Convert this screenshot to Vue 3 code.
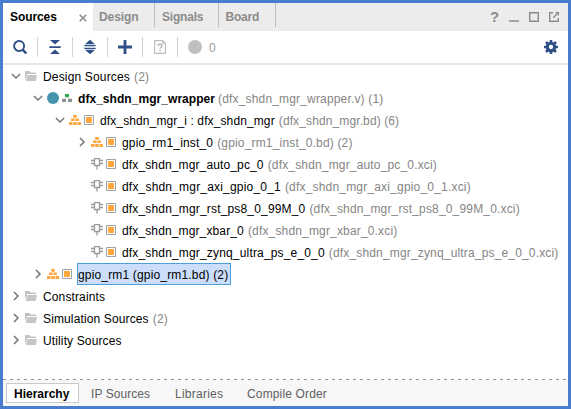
<script setup>
const tabs = ['Design', 'Signals', 'Board']
const views = ['IP Sources', 'Libraries', 'Compile Order']
const rows = [
  { depth: 0, open: true, icon: 'folder', name: 'Design Sources', note: '(2)' },
  { depth: 1, open: true, icon: 'top', name: 'dfx_shdn_mgr_wrapper', note: '(dfx_shdn_mgr_wrapper.v) (1)', cls: 'bold' },
  { depth: 2, open: true, icon: 'bd', name: 'dfx_shdn_mgr_i : dfx_shdn_mgr', note: '(dfx_shdn_mgr.bd) (6)', cls: 'instance' },
  { depth: 3, open: false, icon: 'bd', name: 'gpio_rm1_inst_0', note: '(gpio_rm1_inst_0.bd) (2)' },
  { depth: 3, icon: 'ip', name: 'dfx_shdn_mgr_auto_pc_0', note: '(dfx_shdn_mgr_auto_pc_0.xci)', cls: 'short' },
  { depth: 3, icon: 'ip', name: 'dfx_shdn_mgr_axi_gpio_0_1', note: '(dfx_shdn_mgr_axi_gpio_0_1.xci)', cls: 'long' },
  { depth: 3, icon: 'ip', name: 'dfx_shdn_mgr_rst_ps8_0_99M_0', note: '(dfx_shdn_mgr_rst_ps8_0_99M_0.xci)' },
  { depth: 3, icon: 'ip', name: 'dfx_shdn_mgr_xbar_0', note: '(dfx_shdn_mgr_xbar_0.xci)', cls: 'short' },
  { depth: 3, icon: 'ip', name: 'dfx_shdn_mgr_zynq_ultra_ps_e_0_0', note: '(dfx_shdn_mgr_zynq_ultra_ps_e_0_0.xci)' },
  { depth: 1, open: false, icon: 'bd', name: 'gpio_rm1 (gpio_rm1.bd) (2)', cls: 'selected' },
  { depth: 0, open: false, icon: 'folder', name: 'Constraints', cls: 'short' },
  { depth: 0, open: false, icon: 'folder', name: 'Simulation Sources', note: '(2)', cls: 'short' },
  { depth: 0, open: false, icon: 'folder', name: 'Utility Sources', cls: 'short' },
]
</script>

<template>
  <div class="panel">
    <header class="tabbar">
      <div class="tab active"><span>Sources</span>
        <svg class="close" width="8" height="8" viewBox="0 0 8 8"><path d="M.7.7 7.3 7.3M7.3.7.7 7.3" stroke="#8c8c8c" stroke-width="1.5" /></svg>
      </div>
      <div v-for="t in tabs" :key="t" class="tab" :class="t.toLowerCase()"><span>{{ t }}</span></div>
      <div class="window">
        <span class="help">?</span>
        <svg width="10" height="10" viewBox="0 0 10 10"><path d="M0 9h10" stroke="#8c8c8c" stroke-width="1.5" /></svg>
        <svg width="10" height="10" viewBox="0 0 10 10"><path d="M.7.8h8.6v8.5H.7z" fill="none" stroke="#8c8c8c" stroke-width="1.5" /></svg>
        <svg width="10" height="10" viewBox="0 0 10 10"><path d="M4 .8H.7v8.5h8.6V6" fill="none" stroke="#8c8c8c" stroke-width="1.4" /><path d="M4.3 5.7 8 2" stroke="#8c8c8c" stroke-width="1.5" /><path d="M6 0h4v4z" fill="#8c8c8c" /></svg>
      </div>
    </header>

    <div class="toolbar">
      <div class="tool">
        <svg width="16" height="16" viewBox="0 0 16 16"><circle cx="7.1" cy="7" r="5" fill="none" stroke="#2f4f87" stroke-width="1.9" /><path d="m10.6 10.6 3.7 3.9" stroke="#2f4f87" stroke-width="2.5" /></svg>
      </div>
      <div class="tool">
        <svg width="16" height="16" viewBox="0 0 16 16"><path d="M3 1h10L8 5.600zM2.300 7.200h11.400v1.700H2.300zM3 15h10L8 10.400z" fill="#2f4f87" /></svg>
      </div>
      <div class="tool">
        <svg width="16" height="16" viewBox="0 0 16 16"><path d="M3 5.200 8 .8l5 4.400zM3 10.800h10L8 15.200z" fill="#2f4f87" /><path d="M2.300 6.600h11.400M2.300 9.400h11.400" stroke="#2f4f87" stroke-width="1.400" /></svg>
      </div>
      <div class="tool">
        <svg width="16" height="16" viewBox="0 0 16 16"><path d="M8 1v14M1 8h14" stroke="#2f4f87" stroke-width="2.800" /></svg>
      </div>
      <div class="tool">
        <svg width="16" height="16" viewBox="0 0 16 16"><path d="M2.600 1.600h8.200l2.600 2.600v10.200H2.600z" fill="none" stroke="#bdbdbd" stroke-width="1.200" /><path d="M10.200 1.500v3.200h3.200" fill="#bdbdbd" /><path d="M6 6.800q0-1.600 2-1.600t2 1.600q0 .9-1 1.500T8 9.800M8 10.900v1.600" fill="none" stroke="#b5b5b5" stroke-width="1.400" /></svg>
      </div>
      <div class="messages">
        <svg width="14" height="14" viewBox="0 0 14 14"><circle cx="7" cy="7" r="7" fill="#c0c0c0" /><path d="M7 3v5M7 9.500v1.500" stroke="#b6b6b6" stroke-width="1.300" /></svg>
        <span class="count">0</span>
      </div>
      <svg class="gear" width="14" height="14" viewBox="0 0 14 14"><circle cx="7" cy="7" r="3.700" fill="none" stroke="#2f4f87" stroke-width="3.100" /><path d="M7 0v3M7 11v3M0 7h3M11 7h3M2 2l2 2M10 10l2 2M12 2l-2 2M4 10l-2 2" stroke="#2f4f87" stroke-width="2.600" /></svg>
    </div>

    <main class="tree">
      <div v-for="row in rows" :key="row.name" class="row" :class="[row.cls, 'depth' + row.depth]">
        <svg class="chevron" width="10" height="10" viewBox="0 0 10 10">
          <path v-if="row.open" d="M.9 3 5 7l4.100-4" />
          <path v-else-if="row.open === false" d="M3 .9 7 5 3 9.100" />
        </svg>
        <svg v-if="row.icon === 'folder'" class="icon" width="12" height="12" viewBox="0 0 12 12"><path d="M0 9.500V1h4.500l1 1.500H11V5H2.500z" fill="#c2c2c2" /><path d="M1.800 4H11v1.200H1.800z" fill="#fff" /><path d="M2.800 5H12l-1.200 6H.6z" fill="#c6c6c6" /></svg>
        <svg v-else-if="row.icon === 'top'" class="icon" width="12" height="12" viewBox="0 0 12 12"><circle cx="6" cy="6" r="6" fill="#4594ad" /></svg>
        <svg v-else-if="row.icon === 'bd'" class="icon" width="12" height="12" viewBox="0 0 12 12"><path d="M4.200 1h3.600v2.800H4.200zM2.100 4.500h3.500v2.600H2.100zM6.400 4.500h3.500v2.600H6.400zM0 8h3.500v2.900H0zM4.250 8h3.500v2.900h-3.500zM8.500 8H12v2.900H8.500z" fill="#ffa63d" /></svg>
        <svg v-else class="icon" width="12" height="12" viewBox="0 0 12 12"><path d="M3.500.6h5v6.900h-5zM0 2.500h3M0 5.500h3M9 2.500h3M9 5.500h3M6 8v3.500" fill="none" stroke="#999b9f" stroke-width="1.300" /></svg>
        <svg v-if="row.icon === 'top'" class="icon2" width="10" height="10" viewBox="0 0 10 10"><path d="M3 1h4v3.300H3z" fill="#34a853" /><path d="M0 5.700h4V9H0zM6 5.700h4V9H6z" fill="#8f9195" /></svg>
        <svg v-else-if="row.icon !== 'folder'" class="icon2" width="10" height="10" viewBox="0 0 10 10"><path d="M.5.5h9v9h-9z" fill="#fff" stroke="#a0a3a8" /><path d="M2 2h6v6H2z" fill="#ffa63d" /></svg>
        <div class="label"><span class="name">{{ row.name }}</span><span v-if="row.note" class="note">{{ row.note }}</span></div>
      </div>
    </main>

    <footer class="views">
      <div class="view current"><span>Hierarchy</span></div>
      <div v-for="(v, i) in views" :key="v" class="view" :class="'v' + i"><span>{{ v }}</span></div>
    </footer>
  </div>
</template>

<style>
body { margin: 0; }
</style>

<style scoped>
.panel {
  box-sizing: border-box;
  width: 571px;
  height: 409px;
  border: 3px solid #4a7dcd;
  background: #fff;
  display: flex;
  flex-direction: column;
  font: 12px/22px "Liberation Sans", Arial, sans-serif;
  color: #000;
  white-space: nowrap;
  overflow: hidden;
}
svg { display: block; flex: none; }
.tabbar { height: 28px; background: #ececec; display: flex; flex: none; }
.tab {
  box-sizing: border-box;
  height: 24px;
  padding: 3px 0 0 7px;
  border-right: 1px solid #bcbcbc;
  color: #8b8b8b;
  font-weight: bold;
  letter-spacing: -0.08px;
}
.tab.active {
  width: 90px;
  height: 28px;
  background: #fff;
  color: #000;
  border: 0;
  display: flex;
  justify-content: space-between;
  padding-right: 6px;
}
.close { margin-top: 8px; }
.design { width: 62px; padding-left: 6px; }
.signals { width: 64px; letter-spacing: -0.2px; }
.board { width: 57px; padding-left: 6.500px; letter-spacing: -0.2px; }
.window { margin-left: auto; padding: 0 9px 0 0; display: flex; align-items: center; gap: 10px; height: 28px; }
.help { font-size: 15px; font-weight: bold; color: #8c8c8c; width: 9px; }
.toolbar { height: 32px; flex: none; display: flex; align-items: center; border-bottom: 2px solid #e6e6e6; }
.tool {
  box-sizing: border-box;
  width: 35px;
  height: 20px;
  display: flex;
  align-items: center;
  justify-content: center;
  border-right: 1px solid #d4d4d4;
}
.messages { display: flex; align-items: center; gap: 7px; padding-left: 10px; color: #999; }
.count { padding-top: 2px; }
.gear { margin: 0 10px 0 auto; }
.tree { flex: 1; }
.row { height: 22px; display: flex; align-items: center; gap: 3px; padding-left: 8px; letter-spacing: 0.165px; }
.depth1 { padding-left: 30px; }
.depth2 { padding-left: 52px; }
.depth3 { padding-left: 74px; }
.chevron { fill: none; stroke: #757575; stroke-width: 1.500; }
.icon { margin-left: 1px; }
.label { height: 22px; line-height: 24px; margin-left: 3px; display: flex; gap: 4px; }
.note { color: #858585; }
.short .name { letter-spacing: 0.13px; }
.long { letter-spacing: 0.19px; }
.instance { letter-spacing: 0.115px; }
.bold .name { font-weight: bold; letter-spacing: 0.05px; }
.bold .label { gap: 3px; }
.selected .label {
  box-sizing: border-box;
  width: 154px;
  line-height: 22px;
  margin-left: 2px;
  border: 1px solid #4a9fdc;
  background: #ccdefb;
}
.views {
  height: 27px;
  box-sizing: border-box;
  flex: none;
  display: flex;
  align-items: center;
  padding: 1px 0 0 3px;
  line-height: 24px;
  background:
    repeating-linear-gradient(to right, #929292 0 3px, #fff 3px 7px) top / 100% 1px no-repeat,
    #f7f7f7;
}
.view { height: 22px; color: #606060; }
.current {
  box-sizing: border-box;
  width: 73px;
  height: 20px;
  line-height: 20px;
  border: 1px solid #cacaca;
  background: #fff;
  color: #000;
  font-weight: bold;
  padding-left: 7px;
}
.v0 { width: 84px; padding-left: 12px; box-sizing: border-box; letter-spacing: 0.07px; }
.v1 { width: 72px; padding-left: 12px; box-sizing: border-box; letter-spacing: 0.25px; }
.v2 { padding-left: 12px; letter-spacing: 0.15px; }
</style>
